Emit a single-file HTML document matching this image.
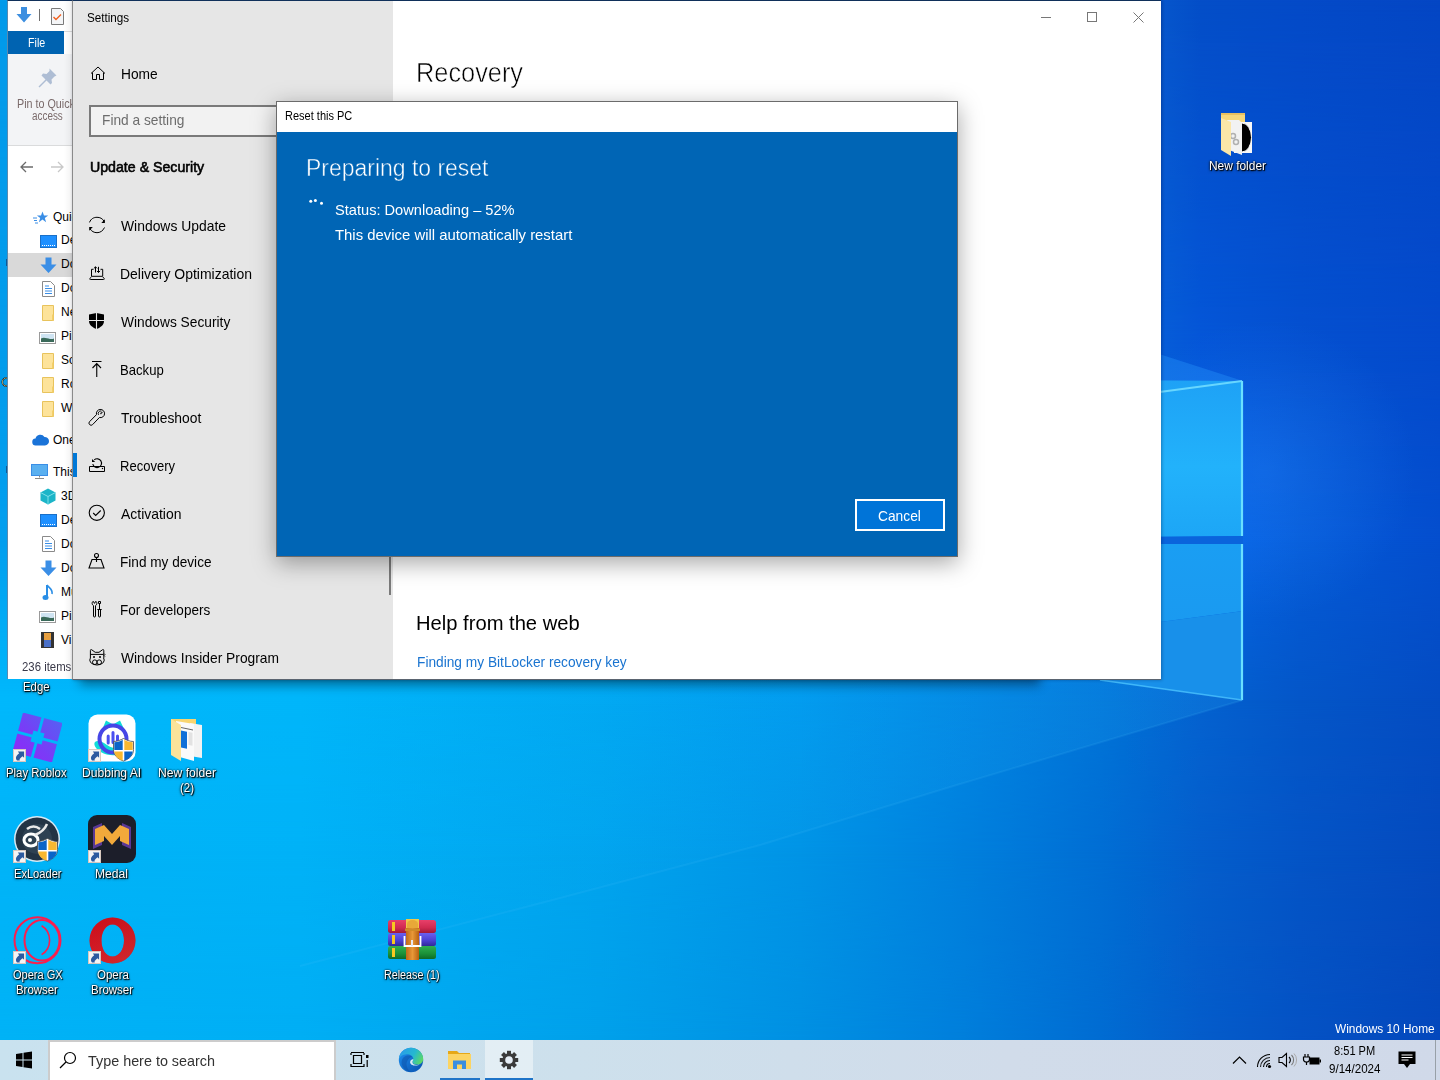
<!DOCTYPE html><html><head><meta charset="utf-8"><style>
*{margin:0;padding:0;box-sizing:border-box}
html,body{width:1440px;height:1080px;overflow:hidden;font-family:"Liberation Sans",sans-serif}
body{position:relative;background:#0a7ee0}
.a{position:absolute}
.t{position:absolute;white-space:nowrap}
svg{position:absolute;overflow:visible}
</style></head><body><div class="a" style="left:0;top:0;width:1440px;height:1040px;background:linear-gradient(90deg,#039aea 0px,#039aea 300px,#039ceb 600px,#0890e2 800px,#0a80da 950px,#0b62d2 1100px,#044ec8 1200px,#044ac8 1300px,#0446c4 1440px);"></div><div class="a" style="left:0;top:0;width:1440px;height:1040px;background:linear-gradient(90deg,#039cec 0px,#039cec 300px,#039eec 600px,#0892e4 800px,#0a84dc 950px,#0a68d8 1100px,#0456d8 1200px,#0450d0 1300px,#044acc 1440px);-webkit-mask-image:linear-gradient(180deg,transparent 0px,#000 350px);mask-image:linear-gradient(180deg,transparent 0px,#000 350px);"></div><div class="a" style="left:0;top:0;width:1440px;height:1040px;background:linear-gradient(90deg,#039eee 0px,#039eee 300px,#03a2ef 600px,#0896e6 800px,#0a88de 950px,#0a70e0 1100px,#0666ea 1200px,#045ad8 1300px,#044ece 1440px);-webkit-mask-image:linear-gradient(180deg,transparent 350px,#000 540px);mask-image:linear-gradient(180deg,transparent 350px,#000 540px);"></div><div class="a" style="left:0;top:0;width:1440px;height:1040px;background:linear-gradient(90deg,#00b8fc 0px,#00b6fa 300px,#00a8f2 600px,#009aee 800px,#0088e4 950px,#0074d8 1100px,#0462d0 1200px,#0456c8 1300px,#044cc2 1440px);-webkit-mask-image:linear-gradient(180deg,transparent 540px,#000 700px);mask-image:linear-gradient(180deg,transparent 540px,#000 700px);"></div><div class="a" style="left:0;top:0;width:1440px;height:1040px;background:linear-gradient(90deg,#00b4f8 0px,#00b2f7 300px,#00a4ee 600px,#0094e6 800px,#0082de 950px,#006ed4 1100px,#045ecc 1200px,#0454c6 1300px,#044abe 1440px);-webkit-mask-image:linear-gradient(180deg,transparent 700px,#000 850px);mask-image:linear-gradient(180deg,transparent 700px,#000 850px);"></div><div class="a" style="left:0;top:0;width:1440px;height:1040px;background:linear-gradient(90deg,#00b2f6 0px,#00aef4 300px,#00a0ea 600px,#0090e2 800px,#0080dc 950px,#006cd2 1100px,#045cca 1200px,#0452c4 1300px,#0448bc 1440px);-webkit-mask-image:linear-gradient(180deg,transparent 850px,#000 1040px);mask-image:linear-gradient(180deg,transparent 850px,#000 1040px);"></div><svg style="left:0;top:0" width="1440" height="1040" viewBox="0 0 1440 1040">
<defs>
<linearGradient id="pane1" x1="0" y1="381" x2="0" y2="537" gradientUnits="userSpaceOnUse">
 <stop offset="0" stop-color="#1ea2f6"/><stop offset=".55" stop-color="#22b2fb"/><stop offset="1" stop-color="#1da6f6"/>
</linearGradient>
<linearGradient id="pane2" x1="0" y1="544" x2="0" y2="700" gradientUnits="userSpaceOnUse">
 <stop offset="0" stop-color="#1a9ef3"/><stop offset="1" stop-color="#1a96ee"/>
</linearGradient>
<linearGradient id="shade" x1="0" y1="700" x2="0" y2="1040" gradientUnits="userSpaceOnUse">
 <stop offset="0" stop-color="#002a80" stop-opacity=".0"/><stop offset="1" stop-color="#002a80" stop-opacity=".08"/>
</linearGradient>
<filter id="bl8" x="-20%" y="-20%" width="140%" height="140%"><feGaussianBlur stdDeviation="8"/></filter>
</defs>
<linearGradient id="beam" x1="300" y1="0" x2="1243" y2="0" gradientUnits="userSpaceOnUse"><stop offset="0" stop-color="#30c0ff" stop-opacity="0"/><stop offset=".5" stop-color="#30c0ff" stop-opacity=".05"/><stop offset="1" stop-color="#30c0ff" stop-opacity=".16"/></linearGradient><polygon points="0,679 1243,679 1243,700 950,787 760,845 560,898 0,1044" fill="url(#beam)"/><polyline points="1243,700 950,787 760,845 560,898 300,966" fill="none" stroke="#50c8ff" stroke-width="2" opacity=".12"/>
<radialGradient id="glow2" cx="1265" cy="470" r="150" gradientUnits="userSpaceOnUse"><stop offset="0" stop-color="#3090ff" stop-opacity=".28"/><stop offset="1" stop-color="#3090ff" stop-opacity="0"/></radialGradient><rect x="1100" y="300" width="340" height="360" fill="url(#glow2)"/><polygon points="1100,335 1243,381 1100,400" fill="#2a9cff" opacity=".35"/>
<polygon points="1100,380 1243,381 1243,536 1100,538" fill="url(#pane1)"/>
<polygon points="1100,544 1243,544 1243,611 1100,630" fill="url(#pane2)"/>
<polygon points="1100,630 1243,611 1243,700 1100,680" fill="#1890ea"/>
<path d="M1242 381V536M1242 544V700" stroke="#6ae0ff" stroke-width="2.2"/>
<polygon points="1100,537 1243,536 1243,544 1100,544" fill="#0a64dc"/><path d="M1100 400L1242 381" stroke="#70dcff" stroke-width="2" opacity=".9"/><path d="M1100 680L1242 700" stroke="#4cc4ff" stroke-width="1.5" opacity=".8"/>
</svg><svg style="left:0;top:255px" width="8" height="230"><path d="M7 4v7" stroke="#1a2a5a" stroke-width="1.2"/><path d="M7.5 123.5a3.5 4 0 1 0 0 7" fill="none" stroke="#000" stroke-width="1.6"/><path d="M7.5 123.5a3.5 4 0 1 0 0 7" fill="none" stroke="#f0e0a0" stroke-width=".7"/><path d="M7 211v7" stroke="#1a2a5a" stroke-width="1.2"/></svg><div class="t " style="left:22.8px;top:680.80px;font-size:12px;line-height:12px;color:#fff;font-weight:normal;transform:scaleX(0.9456);transform-origin:0 0;text-shadow:1px 1px 1px #000,0 0 2px #000,0 1px 3px rgba(0,0,0,.7);">Edge</div><svg style="left:13px;top:713px" width="49" height="49" viewBox="0 0 49 49"><defs><linearGradient id="rbx" x1="0" y1="49" x2="49" y2="0" gradientUnits="userSpaceOnUse"><stop offset="0" stop-color="#9424f8"/><stop offset=".5" stop-color="#7540f6"/><stop offset="1" stop-color="#4f68f2"/></linearGradient><mask id="rbm"><g transform="rotate(15 24.5 24.5)"><rect x="4" y="4" width="41" height="41" fill="#fff"/><path d="M24.5 0v49M0 24.5h49" stroke="#000" stroke-width="2.8"/><rect x="18.8" y="18.8" width="11.4" height="11.4" fill="#000"/></g></mask></defs><rect width="49" height="49" fill="url(#rbx)" mask="url(#rbm)"/></svg><svg style="left:13px;top:749px" width="13" height="13" viewBox="0 0 13 13"><rect x=".5" y=".5" width="12" height="12" fill="#f4f4f4" stroke="#d8c8c0"/><path d="M4 11.5C2.5 10 2.5 7.5 4.5 5.8L6.2 4.3 4.8 2.6h6.3v6.2L9.5 7.3 7.8 8.8C6.8 9.7 6.3 10.6 6.8 11.5z" fill="#2c5aa0"/></svg><div class="t " style="left:6.4px;top:766.50px;font-size:12px;line-height:12px;color:#fff;font-weight:normal;transform:scaleX(0.9464);transform-origin:0 0;text-shadow:1px 1px 1px #000,0 0 2px #000,0 1px 3px rgba(0,0,0,.7);">Play Roblox</div><svg style="left:88px;top:714px" width="48" height="48" viewBox="0 0 48 48"><rect x=".5" y=".5" width="47" height="47" rx="9" fill="#fff"/><path d="M13.5 17L18 6.5l8 4.5zM24 11l8-4.5L37 17z" fill="#10dcd8"/><path d="M7 28c2-2 6-1 9 1 4 3 8 5 12 5v7c-8 1-15-2-19-6-2-2-3.5-5-2-7z" fill="#10dcd8"/><circle cx="25" cy="25" r="13.5" fill="none" stroke="#4646e6" stroke-width="4"/><path d="M20.2 22v7M25 18.5v10M29.5 22v6" stroke="#4a50f0" stroke-width="3" stroke-linecap="round"/><path d="M25.5 27.5c4 0 7-1.5 10-3 3 1.5 6 3 10 3v8c0 5.5-4 9.5-10 11.5-6-2-10-6-10-11.5z" fill="#fff" stroke="#444" stroke-width=".8"/><path d="M26.3 28.3c3.6-.1 6.3-1.3 8.4-2.5V36h-8.4zM36.3 37.6h8.4c-.4 4.4-3.7 7.6-8.4 9.2z" fill="#0a64c8"/><path d="M36.3 25.8c2.1 1.2 4.8 2.4 8.4 2.5V36h-8.4zM26.3 37.6h8.4v9.2c-4.7-1.6-8-4.8-8.4-9.2z" fill="#f8b830"/></svg><svg style="left:88px;top:749px" width="13" height="13" viewBox="0 0 13 13"><rect x=".5" y=".5" width="12" height="12" fill="#f4f4f4" stroke="#d8c8c0"/><path d="M4 11.5C2.5 10 2.5 7.5 4.5 5.8L6.2 4.3 4.8 2.6h6.3v6.2L9.5 7.3 7.8 8.8C6.8 9.7 6.3 10.6 6.8 11.5z" fill="#2c5aa0"/></svg><div class="t " style="left:82.3px;top:766.50px;font-size:12px;line-height:12px;color:#fff;font-weight:normal;transform:scaleX(1.0089);transform-origin:0 0;text-shadow:1px 1px 1px #000,0 0 2px #000,0 1px 3px rgba(0,0,0,.7);">Dubbing AI</div><svg style="left:170px;top:718px" width="34" height="44" viewBox="0 0 34 44"><path d="M1 1h25v14H1z" fill="#f8d570"/><path d="M20 5l12 2v33l-12-2z" fill="#f2f2f2"/><path d="M6 3l18 3v37L6 38z" fill="#fafafa"/><path d="M11 12.5l6 1.2v17l-6-1.2z" fill="#1070d8"/><path d="M18.5 14l4 .8v13l-4-.8z" fill="#e2e2e2"/><path d="M11 9.5l12 2.5" stroke="#555" stroke-width=".9"/><path d="M1 1l10 6v36L1 37z" fill="#fbe39a"/></svg><div class="t " style="left:158px;top:766.50px;font-size:12px;line-height:12px;color:#fff;font-weight:normal;transform:scaleX(1.0112);transform-origin:0 0;text-shadow:1px 1px 1px #000,0 0 2px #000,0 1px 3px rgba(0,0,0,.7);">New folder</div><div class="t " style="left:180px;top:781.60px;font-size:12px;line-height:12px;color:#fff;font-weight:normal;transform:scaleX(0.9546);transform-origin:0 0;text-shadow:1px 1px 1px #000,0 0 2px #000,0 1px 3px rgba(0,0,0,.7);">(2)</div><svg style="left:13px;top:815px" width="49" height="49" viewBox="0 0 49 49"><circle cx="24" cy="24" r="23" fill="#d8eaf4"/><circle cx="24" cy="24" r="21.5" fill="#223344"/><circle cx="24" cy="24" r="15" fill="#2e4152"/><ellipse cx="18" cy="25" rx="7" ry="6" fill="none" stroke="#fff" stroke-width="3"/><path d="M22 20c5-2 10-6 12-11M14 14c4-3 9-3 13 0" fill="none" stroke="#e8e8e8" stroke-width="2.5"/><circle cx="17" cy="25" r="2" fill="#fff"/><g transform="translate(-1,-1)"><path d="M25.5 27.5c4 0 7-1.5 10-3 3 1.5 6 3 10 3v8c0 5.5-4 9.5-10 11.5-6-2-10-6-10-11.5z" fill="#fff" stroke="#444" stroke-width=".8"/><path d="M26.3 28.3c3.6-.1 6.3-1.3 8.4-2.5V36h-8.4zM36.3 37.6h8.4c-.4 4.4-3.7 7.6-8.4 9.2z" fill="#0a64c8"/><path d="M36.3 25.8c2.1 1.2 4.8 2.4 8.4 2.5V36h-8.4zM26.3 37.6h8.4v9.2c-4.7-1.6-8-4.8-8.4-9.2z" fill="#f8b830"/></g></svg><svg style="left:13px;top:850px" width="13" height="13" viewBox="0 0 13 13"><rect x=".5" y=".5" width="12" height="12" fill="#f4f4f4" stroke="#d8c8c0"/><path d="M4 11.5C2.5 10 2.5 7.5 4.5 5.8L6.2 4.3 4.8 2.6h6.3v6.2L9.5 7.3 7.8 8.8C6.8 9.7 6.3 10.6 6.8 11.5z" fill="#2c5aa0"/></svg><div class="t " style="left:13.5px;top:867.80px;font-size:12px;line-height:12px;color:#fff;font-weight:normal;transform:scaleX(0.9247);transform-origin:0 0;text-shadow:1px 1px 1px #000,0 0 2px #000,0 1px 3px rgba(0,0,0,.7);">ExLoader</div><svg style="left:88px;top:815px" width="48" height="48" viewBox="0 0 48 48"><rect x="0" y="0" width="48" height="48" rx="9" fill="#1c1e2a"/><path d="M5 12l9-4v22l-9 4zM43 12l-9-4v22l9 4z" fill="#6a3fb0" opacity=".8"/><path d="M7 14l9-4 8 9 8-9 9 4v16l-9-4v-5l-8 9-8-9v5l-9 4z" fill="#f2a93b"/></svg><svg style="left:88px;top:850px" width="13" height="13" viewBox="0 0 13 13"><rect x=".5" y=".5" width="12" height="12" fill="#f4f4f4" stroke="#d8c8c0"/><path d="M4 11.5C2.5 10 2.5 7.5 4.5 5.8L6.2 4.3 4.8 2.6h6.3v6.2L9.5 7.3 7.8 8.8C6.8 9.7 6.3 10.6 6.8 11.5z" fill="#2c5aa0"/></svg><div class="t " style="left:95.3px;top:867.80px;font-size:12px;line-height:12px;color:#fff;font-weight:normal;transform:scaleX(1.0066);transform-origin:0 0;text-shadow:1px 1px 1px #000,0 0 2px #000,0 1px 3px rgba(0,0,0,.7);">Medal</div><svg style="left:13px;top:916px" width="49" height="49" viewBox="0 0 49 49"><g fill="none" stroke="#fa1e4e" stroke-width="2"><circle cx="24.5" cy="24.2" r="23"/><ellipse cx="29" cy="24.2" rx="17.5" ry="20.3"/><path d="M28.6 9.8c5 3 8 8.5 8 14.4s-3 11.4-8 14.4" stroke-width="1.6"/></g></svg><svg style="left:13px;top:951px" width="13" height="13" viewBox="0 0 13 13"><rect x=".5" y=".5" width="12" height="12" fill="#f4f4f4" stroke="#d8c8c0"/><path d="M4 11.5C2.5 10 2.5 7.5 4.5 5.8L6.2 4.3 4.8 2.6h6.3v6.2L9.5 7.3 7.8 8.8C6.8 9.7 6.3 10.6 6.8 11.5z" fill="#2c5aa0"/></svg><div class="t " style="left:12.6px;top:969.00px;font-size:12px;line-height:12px;color:#fff;font-weight:normal;transform:scaleX(0.9200);transform-origin:0 0;text-shadow:1px 1px 1px #000,0 0 2px #000,0 1px 3px rgba(0,0,0,.7);">Opera GX</div><div class="t " style="left:16.2px;top:983.50px;font-size:12px;line-height:12px;color:#fff;font-weight:normal;transform:scaleX(0.9521);transform-origin:0 0;text-shadow:1px 1px 1px #000,0 0 2px #000,0 1px 3px rgba(0,0,0,.7);">Browser</div><svg style="left:89px;top:917px" width="47" height="47" viewBox="0 0 47 47"><defs><linearGradient id="opr" x1="0" y1="0" x2="47" y2="47" gradientUnits="userSpaceOnUse"><stop offset="0" stop-color="#ff1b2d"/><stop offset=".6" stop-color="#d0101e"/><stop offset="1" stop-color="#a80a14"/></linearGradient><linearGradient id="opr2" x1="23" y1="0" x2="47" y2="40" gradientUnits="userSpaceOnUse"><stop offset="0" stop-color="#a00a10"/><stop offset="1" stop-color="#f04848"/></linearGradient></defs><path fill-rule="evenodd" d="M23.5 .5a23 23 0 1 0 0 46 23 23 0 1 0 0-46zM23.5 7.5c-6.5 0-11 7-11 16s4.5 16 11 16 11.5-7 11.5-16-5-16-11.5-16z" fill="url(#opr)"/><path fill-rule="evenodd" d="M23.5 .5a23 23 0 1 0 0 46 23 23 0 1 0 0-46zM23.5 7.5c-6.5 0-11 7-11 16s4.5 16 11 16 11.5-7 11.5-16-5-16-11.5-16z" fill="url(#opr2)" opacity=".45"/></svg><svg style="left:88px;top:951px" width="13" height="13" viewBox="0 0 13 13"><rect x=".5" y=".5" width="12" height="12" fill="#f4f4f4" stroke="#d8c8c0"/><path d="M4 11.5C2.5 10 2.5 7.5 4.5 5.8L6.2 4.3 4.8 2.6h6.3v6.2L9.5 7.3 7.8 8.8C6.8 9.7 6.3 10.6 6.8 11.5z" fill="#2c5aa0"/></svg><div class="t " style="left:96.6px;top:969.00px;font-size:12px;line-height:12px;color:#fff;font-weight:normal;transform:scaleX(0.9565);transform-origin:0 0;text-shadow:1px 1px 1px #000,0 0 2px #000,0 1px 3px rgba(0,0,0,.7);">Opera</div><div class="t " style="left:91.2px;top:983.50px;font-size:12px;line-height:12px;color:#fff;font-weight:normal;transform:scaleX(0.9543);transform-origin:0 0;text-shadow:1px 1px 1px #000,0 0 2px #000,0 1px 3px rgba(0,0,0,.7);">Browser</div><svg style="left:388px;top:919px" width="48" height="42" viewBox="0 0 48 42"><defs><linearGradient id="wr1" x1="0" y1="0" x2="0" y2="1"><stop offset="0" stop-color="#e8406a"/><stop offset=".6" stop-color="#d02a50"/><stop offset="1" stop-color="#a01a38"/></linearGradient><linearGradient id="wr2" x1="0" y1="0" x2="0" y2="1"><stop offset="0" stop-color="#6a60f0"/><stop offset=".6" stop-color="#4a40d0"/><stop offset="1" stop-color="#302a98"/></linearGradient><linearGradient id="wr3" x1="0" y1="0" x2="0" y2="1"><stop offset="0" stop-color="#30b050"/><stop offset=".6" stop-color="#1a9038"/><stop offset="1" stop-color="#0e6a28"/></linearGradient><linearGradient id="wrb" x1="0" y1="0" x2="1" y2="0"><stop offset="0" stop-color="#c06a18"/><stop offset=".5" stop-color="#e89838"/><stop offset="1" stop-color="#b86010"/></linearGradient></defs><rect x="0" y="1" width="48" height="13" rx="2.5" fill="url(#wr1)"/><rect x="0" y="14" width="48" height="13" rx="2.5" fill="url(#wr2)"/><rect x="0" y="27" width="48" height="13" rx="2.5" fill="url(#wr3)"/><path d="M4 3h3v9H4zM4 16h3v9H4zM4 29h3v9H4z" fill="#f8c820"/><rect x="18" y="6" width="13" height="35" fill="url(#wrb)"/><path d="M18 0h13v9H18z" fill="#f0c848"/><path d="M17 9.5h15v2.5H17z" fill="#d08a28"/><path d="M19 9V5a5.5 4 0 0 1 11 0v4z" fill="#e8a838"/><path d="M16.5 17v10h16V17" fill="none" stroke="#fff" stroke-width="1.8"/><path d="M24 21v6" stroke="#e8e8f0" stroke-width="2"/></svg><div class="t " style="left:384.3px;top:968.55px;font-size:12px;line-height:12px;color:#fff;font-weight:normal;transform:scaleX(0.8948);transform-origin:0 0;text-shadow:1px 1px 1px #000,0 0 2px #000,0 1px 3px rgba(0,0,0,.7);">Release (1)</div><svg style="left:1220px;top:112px" width="34" height="44" viewBox="0 0 34 44"><path d="M1 1h24v6H1z" fill="#e8c060"/><path d="M1 3h24v36L1 32z" fill="#f6d77a"/><path d="M14 10h18v31H14z" fill="#f8f8f8"/><path d="M14 10a14 15.5 0 0 1 0 31z" fill="none"/><ellipse cx="22" cy="25.5" rx="9.5" ry="14.5" fill="#000" stroke="#fff" stroke-width="1"/><path d="M22 11v29" stroke="none"/><path d="M7 8h12l3 3v32L9 38z" fill="#f2f2f2"/><circle cx="13" cy="24" r="2.5" fill="none" stroke="#b0b0b0" stroke-width="1.5"/><circle cx="16" cy="30" r="2.5" fill="none" stroke="#b0b0b0" stroke-width="1.5"/><path d="M1 6l10 4v34L1 38z" fill="#fbe6a8"/></svg><div class="t " style="left:1208.7px;top:160.20px;font-size:12px;line-height:12px;color:#fff;font-weight:normal;transform:scaleX(0.9938);transform-origin:0 0;text-shadow:1px 1px 1px #000,0 0 2px #000,0 1px 3px rgba(0,0,0,.7);">New folder</div><div class="t " style="left:1335.4px;top:1022.70px;font-size:12px;line-height:12px;color:#fff;font-weight:normal;transform:scaleX(0.9900);transform-origin:0 0;">Windows 10 Home</div><div class="a" style="left:7px;top:0;width:80px;height:679px;background:#fff;border-top:1px solid #10305a;border-left:1px solid #5a8ab0"></div><div class="a" style="left:8px;top:54px;width:70px;height:92px;background:#f3f4f6;border-bottom:1px solid #dadbdc"></div><div class="a" style="left:64px;top:31px;width:10px;height:1px;background:#dadbdc"></div><div class="a" style="left:8px;top:31px;width:56px;height:23px;background:#0063b1"></div><div class="t " style="left:27.7px;top:36.70px;font-size:12px;line-height:12px;color:#fff;font-weight:normal;transform:scaleX(0.8895);transform-origin:0 0;">File</div><svg style="left:15px;top:6px" width="18" height="18" viewBox="0 0 18 18"><path d="M6 1h6v7h4.5L9 16.5 1.5 8H6z" fill="#3d8fe0"/></svg><div class="a" style="left:39px;top:9px;width:1px;height:12px;background:#707070"></div><svg style="left:50px;top:7px" width="15" height="18" viewBox="0 0 15 18"><path d="M1.5 1.5h9l3 3v13h-12z" fill="#f4f5f7" stroke="#7a7a7a" stroke-width="1"/><path d="M3.5 10l2.5 2.5 5-5" fill="none" stroke="#f06020" stroke-width="1.4"/></svg><svg style="left:36px;top:67px" width="22" height="22" viewBox="0 0 22 22"><path d="M13.5 1.5l7 7-2 1-3 3 .5 3.5-1.5 1.5-4-4-7 7-1-1 7-7-4-4L7 6.5l3.5.5 3-3z" fill="#aebdd4"/></svg><div class="t " style="left:16.6px;top:97.60px;font-size:12px;line-height:12px;color:#7a6a6a;font-weight:normal;transform:scaleX(0.8965);transform-origin:0 0;">Pin to Quick</div><div class="t " style="left:31.5px;top:110.30px;font-size:12px;line-height:12px;color:#7a6a6a;font-weight:normal;transform:scaleX(0.8247);transform-origin:0 0;">access</div><svg style="left:19px;top:160px" width="48" height="14" viewBox="0 0 48 14"><path d="M2 7h12M7 2L2 7l5 5" fill="none" stroke="#6b6b6b" stroke-width="1.3"/><path d="M32 7h12M39 2l5 5-5 5" fill="none" stroke="#c8c8c8" stroke-width="1.3"/></svg><div class="a" style="left:8px;top:253px;width:70px;height:24px;background:#d9d9d9"></div><svg style="left:33px;top:210.7px" width="16" height="14" viewBox="0 0 16 14"><path d="M9.5 0.5l1.5 4h4.2l-3.4 2.5 1.3 4.2-3.6-2.6-3.6 2.6 1.3-4.2L3.9 4.5H8z" fill="#3a8ee6"/><path d="M0 7h4M1 9.5h3M2 12h3" stroke="#3a8ee6" stroke-width="1"/></svg><div class="t " style="left:53px;top:210.50px;font-size:12px;line-height:12px;color:#000;font-weight:normal;">Quick</div><svg style="left:40px;top:234.6px" width="17" height="13" viewBox="0 0 17 13"><rect x="0.5" y="0.5" width="16" height="12" fill="#1e90ff" stroke="#1a70c8"/><path d="M2 10.5h13" stroke="#fff" stroke-width="1" stroke-dasharray="1 1"/></svg><div class="t " style="left:61px;top:234.40px;font-size:12px;line-height:12px;color:#000;font-weight:normal;">De</div><svg style="left:40px;top:256.6px" width="17" height="17" viewBox="0 0 17 17"><path d="M5.5 0.5h6v7h5L8.5 16 0.5 7.5h5z" fill="#3a8ee6"/></svg><div class="t " style="left:61px;top:258.40px;font-size:12px;line-height:12px;color:#000;font-weight:normal;">Do</div><svg style="left:42px;top:280.6px" width="13" height="16" viewBox="0 0 13 16"><path d="M0.5 0.5h8l4 4v11h-12z" fill="#fff" stroke="#8a8a8a"/><path d="M3 5h4M3 7.5h7M3 10h7M3 12.5h7" stroke="#3a8ee6" stroke-width="1"/></svg><div class="t " style="left:61px;top:282.40px;font-size:12px;line-height:12px;color:#000;font-weight:normal;">Do</div><svg style="left:42px;top:304.6px" width="13" height="17" viewBox="0 0 13 17"><path d="M.5 .5h11v15H.5z" fill="#fde39a" stroke="#e8c35c"/><path d="M10 9.5h1.5v6H10z" fill="#f3cf6a"/></svg><div class="t " style="left:61px;top:306.40px;font-size:12px;line-height:12px;color:#000;font-weight:normal;">Ne</div><svg style="left:39px;top:331.6px" width="17" height="13" viewBox="0 0 17 13"><rect x="0.5" y="0.5" width="16" height="11" fill="#fff" stroke="#9a9a9a"/><rect x="2" y="2" width="13" height="8" fill="#cfe4f2"/><path d="M2 6.5c3-1.5 6 0 9 .5 2 .3 3 0 4-.5V10H2z" fill="#3a6a5a"/></svg><div class="t " style="left:61px;top:330.40px;font-size:12px;line-height:12px;color:#000;font-weight:normal;">Pi</div><svg style="left:42px;top:352.6px" width="13" height="17" viewBox="0 0 13 17"><path d="M.5 .5h11v15H.5z" fill="#fde39a" stroke="#e8c35c"/><path d="M10 9.5h1.5v6H10z" fill="#f3cf6a"/></svg><div class="t " style="left:61px;top:354.40px;font-size:12px;line-height:12px;color:#000;font-weight:normal;">So</div><svg style="left:42px;top:376.6px" width="13" height="17" viewBox="0 0 13 17"><path d="M.5 .5h11v15H.5z" fill="#fde39a" stroke="#e8c35c"/><path d="M10 9.5h1.5v6H10z" fill="#f3cf6a"/></svg><div class="t " style="left:61px;top:378.40px;font-size:12px;line-height:12px;color:#000;font-weight:normal;">Ro</div><svg style="left:42px;top:400.6px" width="13" height="17" viewBox="0 0 13 17"><path d="M.5 .5h11v15H.5z" fill="#fde39a" stroke="#e8c35c"/><path d="M10 9.5h1.5v6H10z" fill="#f3cf6a"/></svg><div class="t " style="left:61px;top:402.40px;font-size:12px;line-height:12px;color:#000;font-weight:normal;">W</div><svg style="left:32px;top:434px" width="17" height="12" viewBox="0 0 17 12"><path d="M4 11.5a3.5 3.5 0 0 1-.5-7A5 5 0 0 1 12.5 3a4.2 4.2 0 0 1 .5 8.5z" fill="#1a73d8"/></svg><div class="t " style="left:53px;top:433.80px;font-size:12px;line-height:12px;color:#000;font-weight:normal;">One</div><svg style="left:31px;top:464px" width="17" height="16" viewBox="0 0 17 16"><rect x="0.5" y="0.5" width="16" height="11" fill="#5ab0f0" stroke="#3a8ee6"/><path d="M8.5 11.5v2M4 14.5h9" stroke="#8a8a8a" stroke-width="1"/></svg><div class="t " style="left:53px;top:465.80px;font-size:12px;line-height:12px;color:#000;font-weight:normal;">This</div><svg style="left:40px;top:488px" width="16" height="17" viewBox="0 0 16 17"><path d="M8 0.5l7.5 4v8L8 16.5 0.5 12.5v-8z" fill="#1cb5c8"/><path d="M0.5 4.5L8 8.5l7.5-4M8 8.5v8" fill="none" stroke="#7fe0ea" stroke-width="1"/></svg><div class="t " style="left:61px;top:489.80px;font-size:12px;line-height:12px;color:#000;font-weight:normal;">3D</div><svg style="left:40px;top:514px" width="17" height="13" viewBox="0 0 17 13"><rect x="0.5" y="0.5" width="16" height="12" fill="#1e90ff" stroke="#1a70c8"/><path d="M2 10.5h13" stroke="#fff" stroke-width="1" stroke-dasharray="1 1"/></svg><div class="t " style="left:61px;top:513.80px;font-size:12px;line-height:12px;color:#000;font-weight:normal;">De</div><svg style="left:42px;top:536px" width="13" height="16" viewBox="0 0 13 16"><path d="M0.5 0.5h8l4 4v11h-12z" fill="#fff" stroke="#8a8a8a"/><path d="M3 5h4M3 7.5h7M3 10h7M3 12.5h7" stroke="#3a8ee6" stroke-width="1"/></svg><div class="t " style="left:61px;top:537.80px;font-size:12px;line-height:12px;color:#000;font-weight:normal;">Do</div><svg style="left:40px;top:560px" width="17" height="17" viewBox="0 0 17 17"><path d="M5.5 0.5h6v7h5L8.5 16 0.5 7.5h5z" fill="#3a8ee6"/></svg><div class="t " style="left:61px;top:561.80px;font-size:12px;line-height:12px;color:#000;font-weight:normal;">Do</div><svg style="left:42px;top:584px" width="12" height="17" viewBox="0 0 12 17"><path d="M5 1v11.5" stroke="#2a8ee6" stroke-width="2"/><ellipse cx="3.5" cy="13.5" rx="3" ry="2.5" fill="#2a8ee6"/><path d="M5 1c2 3 6 4 5 9" fill="none" stroke="#2a8ee6" stroke-width="1.6"/></svg><div class="t " style="left:61px;top:585.80px;font-size:12px;line-height:12px;color:#000;font-weight:normal;">Mu</div><svg style="left:39px;top:611px" width="17" height="13" viewBox="0 0 17 13"><rect x="0.5" y="0.5" width="16" height="11" fill="#fff" stroke="#9a9a9a"/><rect x="2" y="2" width="13" height="8" fill="#cfe4f2"/><path d="M2 6.5c3-1.5 6 0 9 .5 2 .3 3 0 4-.5V10H2z" fill="#3a6a5a"/></svg><div class="t " style="left:61px;top:609.80px;font-size:12px;line-height:12px;color:#000;font-weight:normal;">Pi</div><svg style="left:41px;top:632px" width="13" height="16" viewBox="0 0 13 16"><rect x="0" y="0" width="13" height="16" fill="#333"/><rect x="3" y="1" width="7" height="14" fill="#e8a040"/><rect x="3" y="8" width="7" height="7" fill="#4a70c8"/></svg><div class="t " style="left:61px;top:633.80px;font-size:12px;line-height:12px;color:#000;font-weight:normal;">Vi</div><div class="t " style="left:22px;top:661.30px;font-size:12px;line-height:12px;color:#3a3a4a;font-weight:normal;transform:scaleX(0.9476);transform-origin:0 0;">236 items</div><div class="a" style="left:64px;top:1px;width:8px;height:678px;background:linear-gradient(90deg,rgba(0,0,0,0),rgba(0,0,0,.05))"></div><div class="a" style="left:80px;top:640px;width:960px;height:40px;box-shadow:0 5px 10px rgba(0,0,0,.4)"></div><div class="a" style="left:72px;top:0;width:1089px;height:680px;background:#fff;border-top:1px solid #10305a;border-bottom:1px solid #5a6470;border-left:1px solid #8a8a8a;box-shadow:1px 0 3px rgba(0,0,40,.3)"></div><div class="a" style="left:73px;top:1px;width:320px;height:678px;background:#e6e6e6"></div><div class="t " style="left:87px;top:11.90px;font-size:12px;line-height:12px;color:#000;font-weight:normal;transform:scaleX(0.9733);transform-origin:0 0;">Settings</div><svg style="left:1030px;top:5px" width="120" height="25" viewBox="0 0 120 25"><path d="M11 12.5h10" stroke="#777" stroke-width="1"/><rect x="57.5" y="7.5" width="9" height="9" fill="none" stroke="#777" stroke-width="1"/><path d="M103.5 7.5l10 10M113.5 7.5l-10 10" stroke="#777" stroke-width="1"/></svg><div class="t " style="left:121.3px;top:66.45px;font-size:15px;line-height:15px;color:#000;font-weight:normal;transform:scaleX(0.9172);transform-origin:0 0;">Home</div><div class="a" style="left:89px;top:105px;width:240px;height:32px;background:#f2f2f2;border:2px solid #7a7a7a"></div><div class="t " style="left:101.6px;top:112.35px;font-size:15px;line-height:15px;color:#6d6d6d;font-weight:normal;transform:scaleX(0.9150);transform-origin:0 0;">Find a setting</div><div class="t " style="left:89.5px;top:159.05px;font-size:15px;line-height:15px;color:#000;font-weight:normal;transform:scaleX(0.9446);transform-origin:0 0;-webkit-text-stroke:.6px #000;">Update &amp; Security</div><div class="t " style="left:121px;top:218.45px;font-size:15px;line-height:15px;color:#000;font-weight:normal;transform:scaleX(0.9260);transform-origin:0 0;">Windows Update</div><div class="t " style="left:120.3px;top:266.45px;font-size:15px;line-height:15px;color:#000;font-weight:normal;transform:scaleX(0.9315);transform-origin:0 0;">Delivery Optimization</div><div class="t " style="left:121px;top:314.45px;font-size:15px;line-height:15px;color:#000;font-weight:normal;transform:scaleX(0.9169);transform-origin:0 0;">Windows Security</div><div class="t " style="left:120.3px;top:362.45px;font-size:15px;line-height:15px;color:#000;font-weight:normal;transform:scaleX(0.8734);transform-origin:0 0;">Backup</div><div class="t " style="left:121px;top:410.45px;font-size:15px;line-height:15px;color:#000;font-weight:normal;transform:scaleX(0.9230);transform-origin:0 0;">Troubleshoot</div><div class="t " style="left:120.3px;top:458.45px;font-size:15px;line-height:15px;color:#000;font-weight:normal;transform:scaleX(0.8681);transform-origin:0 0;">Recovery</div><div class="t " style="left:121px;top:506.45px;font-size:15px;line-height:15px;color:#000;font-weight:normal;transform:scaleX(0.9288);transform-origin:0 0;">Activation</div><div class="t " style="left:120.3px;top:554.45px;font-size:15px;line-height:15px;color:#000;font-weight:normal;transform:scaleX(0.9071);transform-origin:0 0;">Find my device</div><div class="t " style="left:120.3px;top:602.45px;font-size:15px;line-height:15px;color:#000;font-weight:normal;transform:scaleX(0.9016);transform-origin:0 0;">For developers</div><div class="t " style="left:121px;top:650.45px;font-size:15px;line-height:15px;color:#000;font-weight:normal;transform:scaleX(0.9201);transform-origin:0 0;">Windows Insider Program</div><div class="a" style="left:73px;top:453px;width:4px;height:24px;background:#0078d7"></div><div class="a" style="left:389px;top:500px;width:2px;height:95px;background:#7a7a7a"></div><div class="t " style="left:416.4px;top:59.20px;font-size:28px;line-height:28px;color:#000;font-weight:normal;transform:scaleX(0.9048);transform-origin:0 0;-webkit-text-stroke:.6px #fff;">Recovery</div><div class="t " style="left:416px;top:612.70px;font-size:20px;line-height:20px;color:#000;font-weight:normal;transform:scaleX(1.0087);transform-origin:0 0;">Help from the web</div><div class="t " style="left:417.3px;top:653.55px;font-size:15px;line-height:15px;color:#1a74d0;font-weight:normal;transform:scaleX(0.9147);transform-origin:0 0;">Finding my BitLocker recovery key</div><svg style="left:89px;top:64px" width="18" height="18" viewBox="0 0 18 18"><path d="M2 9.5L9 3l7 6.5M3.5 8.5v7h4v-5h3v5h4v-7" fill="none" stroke="#000" stroke-width="1"/></svg><svg style="left:88px;top:216px" width="18" height="18" viewBox="0 0 18 18"><g fill="none" stroke="#000" stroke-width="1"><path d="M1.5 6.4C3 2.5 6 1.3 9 1.3S14.5 2.5 16 5.2"/><path d="M16.5 11.5C15 15 12 16.7 9 16.7S3.5 15.2 2.2 13"/></g><path d="M16.9 3.3v3.6h-3.6z" fill="#000"/><path d="M1.2 11.1h3.6l-3.6 3.6z" fill="#000"/></svg><svg style="left:88px;top:264px" width="18" height="18" viewBox="0 0 18 18"><g fill="none" stroke="#000" stroke-width="1"><path d="M5.5 5.3H3.5v7h11.2v-7h-2.2"/><path d="M3.5 12.8L1.9 14.4q-.6 1.1.6 1.1h13q1.2 0 .6-1.1l-1.4-1.6"/><path d="M7.5 2.8v5.7M5.9 4.4l1.6-1.6 1.6 1.6M10.5 2.8v5.7M8.9 6.9l1.6 1.6 1.6-1.6"/></g></svg><svg style="left:88px;top:312px" width="18" height="18" viewBox="0 0 18 18"><path d="M1 2.5L8.5 1 16 2.5V9c0 4-3.5 6.5-7.5 8C4.5 15.5 1 13 1 9z" fill="#000"/><path d="M8.5 1v16M1 8.5h15" stroke="#e6e6e6" stroke-width="1.1"/></svg><svg style="left:88px;top:359px" width="18" height="19" viewBox="0 0 18 19"><path d="M4 2.5h9.5M8.75 4.5V18M4.5 9l4.25-4.5L13 9" fill="none" stroke="#000" stroke-width="1.1"/></svg><svg style="left:88px;top:408px" width="18" height="19" viewBox="0 0 18 19"><g fill="none" stroke="#000" stroke-width="1"><path d="M8.5 6.6A4.1 4.1 0 1 1 11.4 9.5L4.6 16.6a2.1 2.1 0 0 1-3-3z"/><path d="M10.6 6.9A2.6 2.6 0 0 1 13.4 3" stroke-width=".9"/><path d="M12.4 6.1l2-2" stroke="#333" stroke-width="1.4"/></g></svg><svg style="left:88px;top:456px" width="18" height="18" viewBox="0 0 18 18"><path d="M1.5 10.5h15v5h-15z" fill="none" stroke="#000" stroke-width="1"/><path d="M4.8 8A4.4 4.4 0 1 0 6.2 3.9" fill="none" stroke="#000" stroke-width="1.1"/><path d="M4 2.9V6h3.2z" fill="#000"/><circle cx="14.5" cy="12.5" r=".7" fill="#000"/></svg><svg style="left:88px;top:504px" width="18" height="18" viewBox="0 0 18 18"><circle cx="8.8" cy="8.8" r="7.6" fill="none" stroke="#000" stroke-width="1.1"/><path d="M5.2 9l2.5 2.5 5-5" fill="none" stroke="#000" stroke-width="1.1"/></svg><svg style="left:88px;top:552px" width="18" height="18" viewBox="0 0 18 18"><circle cx="8.5" cy="3.5" r="2" fill="none" stroke="#000" stroke-width="1.1"/><path d="M8.5 5.5v4.5M4 7.5h9l3 8.5H1z" fill="none" stroke="#000" stroke-width="1.1"/></svg><svg style="left:88px;top:600px" width="18" height="19" viewBox="0 0 18 19"><g fill="none" stroke="#000" stroke-width="1"><path d="M5.5 5.6A2.5 2.5 0 0 1 5.2 1.3L6.5 3.4 7.8 1.3A2.5 2.5 0 0 1 7.5 5.6V16a1 1 0 0 1-2 0z"/><path d="M10.5 1.5h2v2h-2zM11.5 4v5.5M9.3 9.5h4.4M10.5 9.5V16a1 1 0 0 0 2 0V9.5"/></g></svg><svg style="left:88px;top:648px" width="19" height="19" viewBox="0 0 19 19"><g fill="none" stroke="#000" stroke-width="1"><path d="M2.4 10V2.6Q2.4 1.2 3.6 1.7L7.2 4.3h3.8l3.6-2.6q1.2-.5 1.2.9V10"/><path d="M2.4 10Q1 12 2.6 14.5Q5 17 9 17T15.4 14.5Q17 12 15.6 10"/><path d="M2.4 6.4h13.2"/><circle cx="6.8" cy="14.2" r="2.3"/><circle cx="11.2" cy="14.2" r="2.3"/></g><circle cx="6" cy="9" r="1" fill="#000"/><circle cx="12" cy="9" r="1" fill="#000"/><path d="M16 5.5l1 1-1 1 1 1" stroke="#000" fill="none" stroke-width=".8"/></svg><div class="a" style="left:276px;top:101px;width:682px;height:456px;background:#0065b5;border:1px solid #6b6b6b;box-shadow:0 6px 22px rgba(0,0,0,.35)"></div><div class="a" style="left:277px;top:102px;width:680px;height:30px;background:#fff"></div><div class="t " style="left:285.3px;top:110.38px;font-size:12.5px;line-height:12.5px;color:#000;font-weight:normal;transform:scaleX(0.8807);transform-origin:0 0;">Reset this PC</div><div class="t " style="left:305.8px;top:157.45px;font-size:23px;line-height:23px;color:#fff;font-weight:normal;transform:scaleX(0.9982);transform-origin:0 0;-webkit-text-stroke:.45px #0065b5;">Preparing to reset</div><div class="t " style="left:335.2px;top:201.85px;font-size:15px;line-height:15px;color:#fff;font-weight:normal;transform:scaleX(0.9746);transform-origin:0 0;">Status: Downloading – 52%</div><div class="t " style="left:335.2px;top:226.85px;font-size:15px;line-height:15px;color:#fff;font-weight:normal;transform:scaleX(0.9919);transform-origin:0 0;">This device will automatically restart</div><svg style="left:305px;top:195px" width="24" height="14"><circle cx="5.75" cy="6.3" r="1.5" fill="#fff"/><circle cx="10.4" cy="5.4" r="1.5" fill="#fff"/><circle cx="16.5" cy="8.3" r="1.5" fill="#fff"/></svg><div class="a" style="left:855px;top:499px;width:90px;height:32px;background:#0074d8;border:2px solid #fff"></div><div class="t " style="left:878.4px;top:507.95px;font-size:15px;line-height:15px;color:#fff;font-weight:normal;transform:scaleX(0.9188);transform-origin:0 0;">Cancel</div><div class="a" style="left:0;top:1040px;width:1440px;height:40px;background:linear-gradient(90deg,#c9e2ef 0%,#cde0ec 40%,#d1dcea 70%,#d0d9e9 100%)"></div><svg style="left:15px;top:1051px" width="18" height="18" viewBox="0 0 18 18"><path d="M1 3l6.5-1v6.5H1zM8.5 1.8L17 .6v7.9H8.5zM1 9.5h6.5V16L1 15zM8.5 9.5H17v7.9l-8.5-1.2z" fill="#000"/></svg><div class="a" style="left:48px;top:1040px;width:288px;height:40px;background:#fff;border:2px solid #cccccc;border-bottom:none"></div><svg style="left:59px;top:1051px" width="18" height="18" viewBox="0 0 18 18"><circle cx="11" cy="7" r="5.5" fill="none" stroke="#000" stroke-width="1.2"/><path d="M7 11l-6 6" stroke="#000" stroke-width="1.3"/></svg><div class="t " style="left:88.3px;top:1052.75px;font-size:15px;line-height:15px;color:#333;font-weight:normal;transform:scaleX(0.9579);transform-origin:0 0;">Type here to search</div><svg style="left:350px;top:1051px" width="20" height="17" viewBox="0 0 20 17"><path d="M1 1.5h13M1 15.5h13M3.5 4.5h8v8h-8z" fill="none" stroke="#000" stroke-width="1.2"/><path d="M1 2v2M14 2v2M1 13v3M14 13v3" stroke="#000" stroke-width="1.2"/><rect x="16" y="4" width="2.5" height="3" fill="#000"/><path d="M17.2 9v7" stroke="#000" stroke-width="1.2"/></svg><svg style="left:398px;top:1047px" width="26" height="26" viewBox="0 0 26 26"><defs><linearGradient id="eg1" x1="2" y1="4" x2="24" y2="16" gradientUnits="userSpaceOnUse"><stop offset="0" stop-color="#2a9cea"/><stop offset=".55" stop-color="#25b8d0"/><stop offset="1" stop-color="#62dc5a"/></linearGradient><linearGradient id="eg2" x1="2" y1="10" x2="18" y2="25" gradientUnits="userSpaceOnUse"><stop offset="0" stop-color="#1a84e4"/><stop offset="1" stop-color="#0c5ab8"/></linearGradient></defs><circle cx="13" cy="13" r="12.2" fill="url(#eg2)"/><path d="M.8 13C.8 6 6.5 .8 13 .8s12.2 5 12.2 11c0 3.6-2.6 5.8-6.2 5.8-2.6 0-4.6-1.2-4.6-3 0-1 .9-1.3.9-2.6 0-2.8-3-4.8-6.5-4.8C4.6 7.2.8 10 .8 13z" fill="url(#eg1)"/><path d="M15.3 12c-1.8.3-3.2 1.6-3.2 3.2 0 2 2.4 3.4 5.5 3.4 1.6 0 3-.4 4-1.1-.9.3-1.8.4-2.6.4-2.6 0-4.6-1.2-4.6-3 0-1 .9-1.3.9-2.6z" fill="#d8eaf2"/><path d="M9.2 8.5C5 9.5 3 13 3.8 17c.9 4.3 5 7.6 9.7 8-3-1.5-5-4.5-5-7.6 0-3.6 2.4-6.7 5.7-7.7-1.4-1-3.2-1.5-5-1.2z" fill="#0b4fa6" opacity=".5"/></svg><svg style="left:448px;top:1050px" width="24" height="20" viewBox="0 0 24 20"><path d="M0 1h9l2 2h11v3H0z" fill="#e6a817"/><rect x="0" y="4" width="23" height="15" fill="#fcd462"/><path d="M5 19v-8.5h13V19h-4v-4.5h-5V19z" fill="#3a8ee0"/></svg><div class="a" style="left:440px;top:1078px;width:40px;height:2px;background:#1f74c8"></div><div class="a" style="left:485px;top:1040px;width:48px;height:40px;background:rgba(255,255,255,.45)"></div><div class="a" style="left:485px;top:1078px;width:48px;height:2px;background:#1f74c8"></div><svg style="left:499px;top:1050px" width="20" height="20" viewBox="0 0 20 20"><g fill="#3a3a3a"><rect x="8" y="0.8" width="4" height="4" transform="rotate(0 10 10)"/><rect x="8" y="0.8" width="4" height="4" transform="rotate(45 10 10)"/><rect x="8" y="0.8" width="4" height="4" transform="rotate(90 10 10)"/><rect x="8" y="0.8" width="4" height="4" transform="rotate(135 10 10)"/><rect x="8" y="0.8" width="4" height="4" transform="rotate(180 10 10)"/><rect x="8" y="0.8" width="4" height="4" transform="rotate(225 10 10)"/><rect x="8" y="0.8" width="4" height="4" transform="rotate(270 10 10)"/><rect x="8" y="0.8" width="4" height="4" transform="rotate(315 10 10)"/></g><circle cx="10" cy="10" r="6.8" fill="#3a3a3a"/><circle cx="10" cy="10" r="3.8" fill="#e6eef6"/></svg><svg style="left:1232px;top:1055px" width="15" height="10" viewBox="0 0 15 10"><path d="M1 8.5l6.5-6.5 6.5 6.5" fill="none" stroke="#000" stroke-width="1.2"/></svg><svg style="left:1256px;top:1053px" width="16" height="16" viewBox="0 0 16 16"><g fill="none" stroke="#000" stroke-width="1.1"><path d="M1.5 14A12.5 12.5 0 0 1 14 1.5"/><path d="M4.5 14A9.5 9.5 0 0 1 14 4.5" opacity=".85"/><path d="M7.5 14A6.5 6.5 0 0 1 14 7.5"/><path d="M10.5 14A3.5 3.5 0 0 1 14 10.5"/></g><circle cx="13.5" cy="13.5" r="1.6" fill="#000"/></svg><svg style="left:1278px;top:1052px" width="18" height="16" viewBox="0 0 18 16"><path d="M1 5.5h3l4.5-4v13L4 10.5H1z" fill="none" stroke="#000" stroke-width="1.1"/><path d="M11 5a4 4 0 0 1 0 6" fill="none" stroke="#000" stroke-width="1.1"/><path d="M13.5 3a7 7 0 0 1 0 10" fill="none" stroke="#777" stroke-width="1.1"/><path d="M16 1.5a9.5 9.5 0 0 1 0 13" fill="none" stroke="#aaa" stroke-width="1"/></svg><svg style="left:1302px;top:1053px" width="19" height="13" viewBox="0 0 19 13"><path d="M3 1v3M6 1v3M1.5 4h6v2.5c0 1.5-1 2.5-3 2.5s-3-1-3-2.5zM4.5 9v3" fill="none" stroke="#000" stroke-width="1.2"/><rect x="7.5" y="4.5" width="10" height="7" fill="#000"/><rect x="17.5" y="6.5" width="1.5" height="3" fill="#000"/></svg><div class="t " style="left:1334.3px;top:1044.50px;font-size:12px;line-height:12px;color:#000;font-weight:normal;transform:scaleX(0.9219);transform-origin:0 0;">8:51 PM</div><div class="t " style="left:1329.2px;top:1062.60px;font-size:12px;line-height:12px;color:#000;font-weight:normal;transform:scaleX(0.9647);transform-origin:0 0;">9/14/2024</div><svg style="left:1398px;top:1051px" width="18" height="18" viewBox="0 0 18 18"><path d="M.5 .5h17v12.5H12l-3 4-3-4H.5z" fill="#000"/><path d="M3.5 4h11M3.5 6.5h11M3.5 9h7" stroke="#fff" stroke-width="1"/></svg><div class="a" style="left:1435px;top:1040px;width:1px;height:40px;background:#98a0a8"></div></body></html>
